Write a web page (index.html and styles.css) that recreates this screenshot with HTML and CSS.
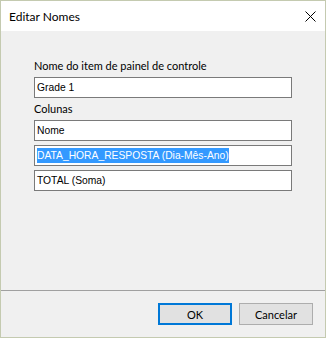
FILE: index.html
```html
<!DOCTYPE html>
<html lang="pt">
<head>
    <meta charset="UTF-8">
    <title>Editar Nomes</title>
    <link rel="stylesheet" href="styles.css">
</head>
<body>

<div class="window">
    <div class="titlebar">
        <span class="title">Editar Nomes</span>
        <svg class="close" width="11" height="11" viewBox="0 0 11 11">
            <path d="M0.5 0.5 L10.5 10.5 M10.5 0.5 L0.5 10.5" stroke="#000" stroke-width="1"/>
        </svg>
    </div>

    <div class="content">
        <div class="label first">Nome do item de painel de controle</div>
        <div class="field">Grade 1</div>

        <div class="label">Colunas</div>
        <div class="columns">
            <div class="field">Nome</div>
            <div class="field"><span class="selected">DATA_HORA_RESPOSTA (Dia-Mês-Ano)</span></div>
            <div class="field">TOTAL (Soma)</div>
        </div>
    </div>

    <div class="footer">
        <button class="btn default">OK</button>
        <button class="btn">Cancelar</button>
    </div>
</div>

</body>
</html>
```

FILE: styles.css
```css
body {
    margin: 0;
    padding: 0;
    background-color: #f0f0f0;
    font-family: Lato, "Noto Sans", sans-serif;
}
.window {
    width: 326px;
    height: 338px;
    box-sizing: border-box;
    border: 1px solid #c4cab0;
    background-color: #f0f0f0;
    display: flex;
    flex-direction: column;
}
.titlebar {
    height: 30px;
    background-color: white;
    display: flex;
    align-items: center;
    justify-content: space-between;
    padding: 0 9px 0 8px;
}
.title {
    font-size: 12px;
    color: #000;
}
.content {
    flex: 1;
    padding: 0 33px;
}
.label {
    font-size: 11px;
    line-height: 15px;
    color: #000;
    margin: 3px 0 4px;
}
.label.first {
    margin-top: 27px;
}
.field {
    height: 21px;
    box-sizing: border-box;
    border: 1px solid #7a7a7a;
    background-color: white;
    font-family: "Liberation Sans", Arial, sans-serif;
    font-size: 10.3px;
    line-height: 19px;
    padding: 0 2px;
}
.columns {
    display: flex;
    flex-direction: column;
    gap: 4px;
}
.selected {
    background-color: #3399ff;
    color: white;
    padding: 2px 0;
}
.footer {
    height: 47px;
    box-sizing: border-box;
    border-top: 1px solid #a0a0a0;
    display: flex;
    justify-content: flex-end;
    align-items: flex-start;
    gap: 7px;
    padding: 12px 12px 0 0;
}
.btn {
    width: 74px;
    height: 22px;
    box-sizing: border-box;
    border: 1px solid #adadad;
    background-color: #e1e1e1;
    font-family: Lato, "Noto Sans", sans-serif;
    font-size: 11px;
    color: #000;
    padding: 0;
}
.btn.default {
    border: 2px solid #0078d7;
}
```
